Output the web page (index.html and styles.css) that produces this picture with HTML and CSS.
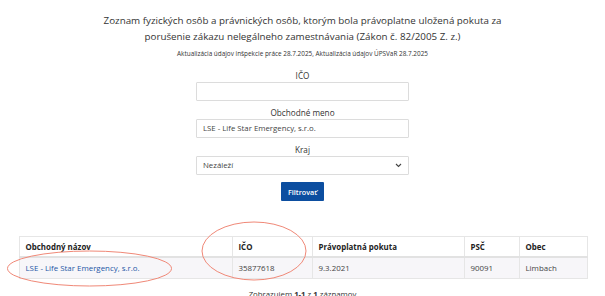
FILE: index.html
```html
<!DOCTYPE html>
<html lang="sk">
<head>
<meta charset="utf-8">
<link rel="stylesheet" href="styles.css">
</head>
<body>
<div class="page">
  <h1 class="title">Zoznam fyzických osôb a právnických osôb, ktorým bola právoplatne uložená pokuta za porušenie zákazu nelegálneho zamestnávania (Zákon č. 82/2005 Z. z.)</h1>
  <p class="updated">Aktualizácia údajov inšpekcie práce 28.7.2025, Aktualizácia údajov ÚPSVaR 28.7.2025</p>
  <form class="filter">
    <label class="field">
      <span class="label">IČO</span>
      <span class="input"></span>
    </label>
    <label class="field">
      <span class="label">Obchodné meno</span>
      <span class="input">LSE - Life Star Emergency, s.r.o.</span>
    </label>
    <label class="field">
      <span class="label">Kraj</span>
      <span class="input select">Nezáleží
        <svg class="chev" width="7" height="5" viewBox="0 0 7 5"><path d="M1 1l2.5 2.5L6 1" fill="none" stroke="#444" stroke-width="1.1"/></svg>
      </span>
    </label>
    <span class="btn">Filtrovať</span>
  </form>
  <div class="tablewrap">
    <table class="results">
      <thead>
        <tr><th class="c1">Obchodný názov</th><th class="c2">IČO</th><th class="c3">Právoplatná pokuta</th><th class="c4">PSČ</th><th class="c5">Obec</th></tr>
      </thead>
      <tbody>
        <tr><td><a href="#">LSE - Life Star Emergency, s.r.o.</a></td><td>35877618</td><td>9.3.2021</td><td>90091</td><td>Limbach</td></tr>
      </tbody>
    </table>
    <svg class="marks" width="605" height="296" viewBox="0 0 605 296">
      <ellipse cx="89.5" cy="268.5" rx="82" ry="17.5" fill="none" stroke="#f08877" stroke-width="1"/>
      <ellipse cx="254" cy="251" rx="52" ry="29" fill="none" stroke="#f08877" stroke-width="1"/>
    </svg>
  </div>
  <p class="count">Zobrazujem <b>1-1</b> z <b>1</b> záznamov</p>
</div>
</body>
</html>
```
FILE: styles.css
```css
html, body {
  margin: 0;
  padding: 0;
  background: #fff;
  overflow: hidden;
}
body {
  font-family: "Open Sans", "DejaVu Sans", sans-serif;
  color: #333;
  width: 605px;
  height: 296px;
  position: relative;
}
.page {
  display: flex;
  flex-direction: column;
  align-items: center;
  padding-top: 13px;
}
.title {
  margin: 0;
  width: 410px;
  font-size: 9.8px;
  line-height: 16px;
  font-weight: 400;
  text-align: center;
  color: #333;
}
.updated {
  margin: 4px 0 0;
  font-size: 6.4px;
  line-height: 9px;
  text-align: center;
}
.filter {
  margin-top: 12px;
  width: 213px;
  display: flex;
  flex-direction: column;
  align-items: center;
}
.field {
  width: 100%;
  display: flex;
  flex-direction: column;
  align-items: center;
  margin-bottom: 6px;
}
.label {
  font-size: 8.2px;
  line-height: 12px;
}
.input {
  box-sizing: border-box;
  width: 100%;
  height: 19px;
  border: 1px solid #dcdcdc;
  border-radius: 1px;
  font-size: 7.8px;
  line-height: 17px;
  padding: 0 6px;
  color: #444;
  display: flex;
  align-items: center;
  justify-content: space-between;
}
.btn {
  margin-top: 1px;
  width: 43px;
  height: 19px;
  background: #0c4ea0;
  color: #fff;
  font-size: 7.2px;
  font-weight: 600;
  display: flex;
  align-items: center;
  justify-content: center;
  border-radius: 1px;
}
.tablewrap {
  margin-top: 35px;
  width: 569px;
  margin-left: 1px;
}
.results {
  width: 569px;
  border-collapse: collapse;
  font-size: 7.9px;
  table-layout: fixed;
}
.results th, .results td {
  border: 1px solid #e6e6e6;
  text-align: left;
  padding: 0 6px;
  white-space: nowrap;
}
.results th {
  height: 19px;
  font-weight: 700;
  color: #222;
  border-bottom: 2px solid #e2e2e2;
}
.results td {
  height: 20px;
  background: #f7f6f9;
  color: #444;
}
.results a {
  color: #2456a6;
  text-decoration: none;
}
.c1 { width: 200px; }
.c2 { width: 67px; }
.c3 { width: 139px; }
.c4 { width: 42px; }
.results th.c5 { width: auto; }
.marks {
  position: absolute;
  left: 0;
  top: 0;
  pointer-events: none;
}
.count {
  margin: 10px 0 0;
  font-size: 7.8px;
  line-height: 10px;
  color: #333;
}
.count b { font-weight: 700; }
```
